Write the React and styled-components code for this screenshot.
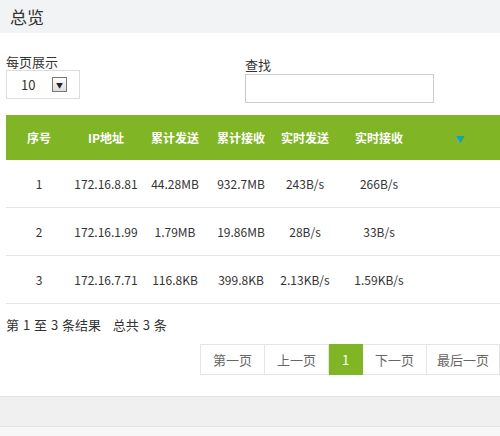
import React from "react";
import styled, { createGlobalStyle } from "styled-components";

const G = createGlobalStyle`
  html,body{margin:0;padding:0;background:#fff;}
  body{font-family:"Microsoft YaHei","Noto Sans CJK SC","Liberation Sans",sans-serif;color:#333;width:500px;height:436px;overflow:hidden;}
`;
const Header = styled.div`height:33px;background:#f2f3f4;display:flex;align-items:center;padding-left:10px;font-size:17px;color:#333;`;
const Controls = styled.div`display:flex;align-items:flex-start;padding:21px 0 0 6px;`;
const Group = styled.div`display:flex;flex-direction:column;flex-shrink:0;width:${p=>p.w}px;`;
const Label = styled.div`font-size:13px;line-height:15px;margin-top:${p=>p.mt||0}px;`;
const SelectBox = styled.div`width:74px;height:29px;flex-shrink:0;margin-top:1px;border:1px solid #ddd;box-sizing:border-box;display:flex;align-items:center;justify-content:space-between;padding:0 12px 0 14px;font-size:13px;`;
const Drop = styled.span`width:13px;height:13px;border:1px solid #777;background:linear-gradient(#fff,#ddd);display:flex;align-items:center;justify-content:center;font-size:7px;color:#222;`;
const Input = styled.div`width:189px;height:29px;flex-shrink:0;margin-top:2px;border:1px solid #ccc;box-sizing:border-box;`;
const Table = styled.table`margin:12px 0 0 6px;border-collapse:collapse;table-layout:fixed;width:494px;font-size:12px;`;
const Th = styled.th`background:#80b626;color:#fff;height:45px;font-weight:bold;font-size:12px;padding:0;text-align:center;`;
const Td = styled.td`height:47px;text-align:center;border-bottom:1px solid #e5e5e5;padding:0;color:#333;`;
const Summary = styled.div`font-size:13px;padding:11px 0 0 6px;height:29px;box-sizing:border-box;word-spacing:1px;`;
const Pager = styled.div`display:flex;justify-content:flex-end;margin-top:11px;height:31px;`;
const PBtn = styled.div`width:${p=>p.w}px;border:1px solid #e5e5e5;border-left:${p=>p.first?"1px solid #e5e5e5":"none"};display:flex;align-items:center;justify-content:center;font-size:13px;color:${p=>p.active?"#fff":"#666"};background:${p=>p.active?"#80b626":"#fff"};border-color:${p=>p.active?"#80b626":"#e5e5e5"};`;
const Band = styled.div`margin-top:21px;height:29px;background:#f0f0f0;border-top:1px solid #e3e3e3;border-bottom:1px solid #e3e3e3;`;
const Rest = styled.div`height:40px;background:#f7f7f7;`;

const widths=[66,68,70,62,66,82,80];
const heads=["序号","IP地址","累计发送","累计接收","实时发送","实时接收"];
const rows=[["1","172.16.8.81","44.28MB","932.7MB","243B/s","266B/s"],["2","172.16.1.99","1.79MB","19.86MB","28B/s","33B/s"],["3","172.16.7.71","116.8KB","399.8KB","2.13KB/s","1.59KB/s"]];

export default function App(){
  return <>
    <G/>
    <Header>总览</Header>
    <Controls>
      <Group w={239}><Label>每页展示</Label><SelectBox>10<Drop>▼</Drop></SelectBox></Group>
      <Group w={200}><Label mt={3}>查找</Label><Input/></Group>
    </Controls>
    <Table>
      <colgroup>{widths.map((w,i)=><col key={i} style={{width:w}}/>)}</colgroup>
      <thead><tr>{heads.map(h=><Th key={h}>{h}</Th>)}<Th><span style={{color:"#17a2b8",fontSize:9}}>▼</span></Th></tr></thead>
      <tbody>{rows.map(r=><tr key={r[0]}>{r.map((c,i)=><Td key={i}>{c}</Td>)}<Td/></tr>)}</tbody>
    </Table>
    <Summary>第 1 至 3 条结果&nbsp;&nbsp;&nbsp;总共 3 条</Summary>
    <Pager>
      <PBtn w={63} first>第一页</PBtn>
      <PBtn w={63}>上一页</PBtn>
      <PBtn w={33} active>1</PBtn>
      <PBtn w={63}>下一页</PBtn>
      <PBtn w={72}>最后一页</PBtn>
    </Pager>
    <Band/>
    <Rest/>
  </>;
}
